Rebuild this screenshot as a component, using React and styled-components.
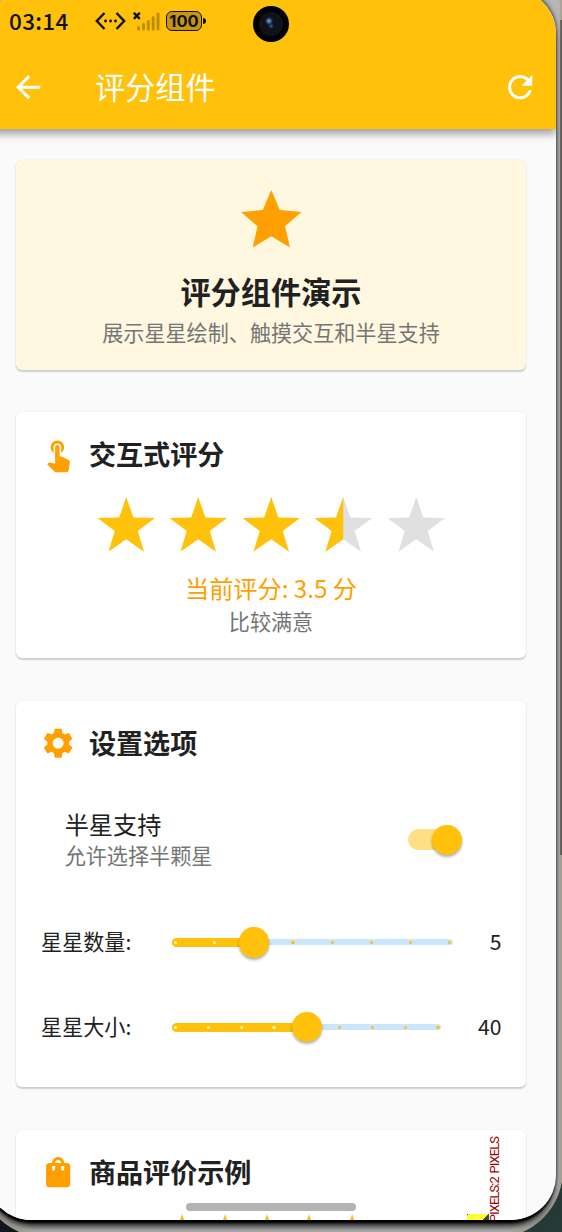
import React, { useState } from 'react';
import styled, { createGlobalStyle } from 'styled-components';
import { MdArrowBack, MdRefresh, MdStar, MdTouchApp, MdSettings, MdShoppingBag } from 'react-icons/md';

const amber = '#ffc10a';
const orange = '#ffa000';

const GlobalStyle = createGlobalStyle`
            * { box-sizing: border-box; }
            body {
                margin: 0;
                overflow: hidden;
                background: #243a36;
                font-family: "Noto Sans CJK SC", "Noto Sans", sans-serif;
                color: #212121;
            }
            `;
const Stage = styled.div`
            width: 562px;
            height: 1232px;
            overflow: hidden;
            background: linear-gradient(to right, #10161c 0, #10161c 40%, #243a36 80%);
            `;
const Frame = styled.div`
            width: 584px;
            height: 1258px;
            margin: -20px 0 0 -21px;
            padding: 9px 7px;
            border-radius: 20px 20px 68px 68px;
            background:
                linear-gradient(to right, transparent 580.5px, #454545 582px) 0 40px / 584px 835px no-repeat,
                linear-gradient(to right, #b6b6b6 579px, #b4b4b2 580.5px, #a8a299 582px);
            box-shadow: inset 0 -3px 4px #a59c8c;
            `;
const Screen = styled.div`
            position: relative;
            width: 570px;
            height: 1231px;
            overflow: hidden;
            border-radius: 45px;
            background: #fafafa;
            `;
const Glass = styled.div`
            border-radius: 45px;
            box-shadow: 0 4px 2px -1px #000, 0 8px 6px -3px #222, 0 9px 8px -3px #555, 1px -2px 4px -1px #333;
            `;
const Header = styled.header`
            position: relative;
            height: 140px;
            padding-top: 11px;
            background: ${amber};
            box-shadow: 0 5px 8px rgba(0, 0, 0, .36);
            `;
const StatusBar = styled.div`
            display: flex;
            align-items: center;
            height: 44px;
            padding: 0 0 2px 23px;
            color: #111;
            `;
const Time = styled.span`
            width: 86px;
            margin-top: -3px;
            font-size: 22.5px;
            font-weight: 500;
            letter-spacing: .3px;
            `;
const StatusIcon = styled.svg`
            display: block;
            flex: none;
            margin-right: ${props => props.$gap || 0}px;
            `;
const Battery = styled.span`
            display: flex;
            align-items: center;
            justify-content: center;
            width: 36px;
            height: 20px;
            border: 1.5px solid #111;
            border-radius: 6px;
            background: #c59610;
            font: bold 16.5px/17px Inter, sans-serif;
            `;
const BatteryTip = styled.span`
            width: 3px;
            height: 6px;
            margin: 0 47px 0 1px;
            border-radius: 0 3px 3px 0;
            background: #111;
            `;
const Camera = styled.span`
            width: 36px;
            height: 36px;
            margin-top: 6px;
            border-radius: 50%;
            background:
                radial-gradient(circle at 16px 15px, #9db9e8 0, #35598a 2px, transparent 4px),
                radial-gradient(circle at 18px 20px, #38588c 0, transparent 3px),
                radial-gradient(circle, #0b1420 0, #101216 9px, #131416 11px, #000 13px);
            `;
const AppBar = styled.div`
            display: flex;
            align-items: center;
            height: 86px;
            padding: 0 17.7px 0 24.3px;
            color: #fff;
            `;
const AppTitle = styled.h1`
            flex: 1;
            margin: -3px 0 0 48.3px;
            font-size: 30.2px;
            font-weight: 400;
            line-height: 40px;
            `;
const Content = styled.main`
            display: flex;
            flex-direction: column;
            gap: 42.4px;
            padding: 30.7px 30.3px;
            `;
const Card = styled.section`
            flex: none;
            height: ${props => props.$height}px;
            padding: 24.2px;
            border-radius: 6px;
            background: ${props => props.$tint || '#fff'};
            box-shadow: 0 1.5px 1.5px rgba(0, 0, 0, .17), 0 0 2px rgba(0, 0, 0, .07);
            `;
const Hero = styled(Card)`
            display: flex;
            flex-direction: column;
            align-items: center;
            `;
const HeroTitle = styled.h2`
            margin: 16.8px 0 10px;
            font-size: 30.2px;
            font-weight: 700;
            line-height: 36.6px;
            `;
const Caption = styled.p`
            margin: 0;
            font-size: 21.1px;
            line-height: 24.2px;
            color: #757575;
            text-align: center;
            `;
const CardHead = styled.div`
            display: flex;
            align-items: center;
            gap: 12.1px;
            height: 36.3px;
            margin-bottom: 24.2px;
            color: ${orange};
            `;
const CardTitle = styled.h3`
            margin: -1px 0 0;
            font-size: 27.1px;
            font-weight: 700;
            line-height: 36px;
            color: #212121;
            `;
const Stars = styled.div`
            display: flex;
            justify-content: center;
            gap: ${props => props.$gap}px;
            `;
const StarSvg = styled.svg`
            display: block;
            flex: none;
            `;
const Score = styled.p`
            margin: 15.2px 0 6px;
            font-size: 24.2px;
            line-height: 30px;
            text-align: center;
            color: ${orange};
            `;
const SwitchRow = styled.div`
            display: flex;
            align-items: center;
            justify-content: space-between;
            height: 108.6px;
            padding: 0 44px 0 24.2px;
            margin-bottom: 12.1px;
            `;
const SwitchText = styled.div`
            margin-top: -2px;
            `;
const SwitchTitle = styled.div`
            font-size: 24.2px;
            line-height: 32px;
            `;
const SwitchNote = styled(Caption)`
            line-height: 30px;
            text-align: left;
            `;
const Track = styled.button`
            display: flex;
            align-items: center;
            justify-content: ${props => props.$on ? 'flex-end' : 'flex-start'};
            width: 50px;
            height: 21px;
            padding: 0;
            border: 0;
            border-radius: 11px;
            background: ${props => props.$on ? '#ffe084' : '#bdbdbd'};
            `;
const Knob = styled.span`
            flex: none;
            width: 30.4px;
            height: 30.4px;
            border-radius: 50%;
            background: ${amber};
            box-shadow: 0 2px 3px rgba(0, 0, 0, .32);
            `;
const SwitchKnob = styled(Knob)`
            margin-right: -4.6px;
            `;
const SliderRow = styled.div`
            display: flex;
            align-items: center;
            height: 72.6px;
            margin-bottom: 12.1px;
            font-size: 21.1px;
            `;
const SliderLabel = styled.span`
            width: 131.9px;
            margin-top: -2.4px;
            padding-left: .6px;
            `;
const SliderValue = styled.span`
            margin: -2.4px 0 0 37px;
            `;
const Rail = styled.div`
            position: relative;
            display: flex;
            align-items: center;
            flex: 1;
            height: 6px;
            border-radius: 3px;
            background: #cbe6fc;
            `;
const Fill = styled.div`
            height: 9px;
            border-radius: 4.5px 0 0 4.5px;
            background: ${amber};
            `;
const Ticks = styled.div`
            position: absolute;
            inset: 0 1.5px;
            display: flex;
            align-items: center;
            justify-content: space-between;
            `;
const Tick = styled.span`
            width: 3.2px;
            height: 3.2px;
            border-radius: 50%;
            background: ${props => props.$active ? '#ffeeb5' : amber};
            `;
const SliderKnob = styled(Knob)`
            position: relative;
            margin-left: -15.2px;
            `;
const ReviewRow = styled.div`
            display: flex;
            align-items: flex-start;
            justify-content: space-between;
            margin-top: -.7px;
            padding: 0 12.8px 0 127px;
            `;
const Overflow = styled.div`
            position: relative;
            width: 21.5px;
            height: 40px;
            background: repeating-linear-gradient(135deg, #444 0 1px, #ffff30 1px 15.2px, #444 15.2px 29.4px);
            `;
const OverflowLabel = styled.span`
            position: absolute;
            left: 21px;
            top: -77px;
            writing-mode: vertical-rl;
            transform: rotate(180deg);
            font: 13px/14px Roboto, sans-serif;
            letter-spacing: -.95px;
            word-spacing: 1.5px;
            color: #900;
            white-space: nowrap;
            `;
const HomeBar = styled.div`
            position: absolute;
            left: 200px;
            bottom: 9px;
            width: 170px;
            height: 8px;
            border-radius: 4px;
            background: #b3b3b3;
            `;

// five-pointed star, inner radius is 0.4 of the outer one
const starPoints = Array.from({ length: 10 }, (_, i) => {
    const r = i % 2 ? 20 : 50;
    const a = i * Math.PI / 5 - Math.PI / 2;
    return `${50 + r * Math.cos(a)},${50 + r * Math.sin(a)}`;
}).join(' ');

function Star({ fill, size }) {
    return (
        <StarSvg width={size} height={size} viewBox="0 0 100 100">
            <polygon points={starPoints} fill={fill > 0.9 ? amber : '#e0e0e0'} />
            {fill === 0.5 && (
                <>
                    <clipPath id="half"><rect width="50" height="100" /></clipPath>
                    <polygon points={starPoints} fill={amber} clipPath="url(#half)" />
                </>
            )}
        </StarSvg>
    );
}

function Rating({ value, count, size, gap }) {
    return (
        <Stars $gap={gap}>
            {Array.from({ length: count }, (_, i) => (
                <Star key={i} size={size} fill={Math.max(0, Math.min(1, value - i))} />
            ))}
        </Stars>
    );
}

function Slider({ label, value, step, steps }) {
    return (
        <SliderRow>
            <SliderLabel>{label}</SliderLabel>
            <Rail>
                {/* the rail is 3px longer than the tick range at each end */}
                <Fill style={{ width: `calc(3px + (100% - 6px) * ${step / steps})` }} />
                <Ticks>
                    {Array.from({ length: steps + 1 }, (_, i) => <Tick key={i} $active={i < step} />)}
                </Ticks>
                <SliderKnob />
            </Rail>
            <SliderValue>{value}</SliderValue>
        </SliderRow>
    );
}

export default function App() {
    const [half, setHalf] = useState(true);

    return (
        <Stage>
            <GlobalStyle />
            <Frame>
                <Glass>
                    <Screen>
                        <Header>
                            <StatusBar>
                                <Time>03:14</Time>
                                <StatusIcon $gap={7} width="31" height="18" viewBox="0 0 31 18" fill="none" stroke="#111" strokeWidth="2.4">
                                    <path d="M9.5 1 1.8 9l7.7 8M21.5 1l7.7 8-7.7 8" />
                                    <path d="M10.5 9h.1M15.5 9h.1M20.5 9h.1" strokeWidth="2.8" strokeLinecap="round" />
                                </StatusIcon>
                                <StatusIcon $gap={6} width="27" height="19" viewBox="0 0 27 19" fill="none" strokeLinecap="round">
                                    <path d="M5.5 15.5v1.5M10.5 12.5V17M15.3 9.5V17M20.2 5.5V17M25 2v15" stroke="#bd8e0b" strokeWidth="3" />
                                    <path d="m.8.8 6 6m0-6-6 6" stroke="#111" strokeWidth="2.4" strokeLinecap="butt" />
                                </StatusIcon>
                                <Battery>100</Battery>
                                <BatteryTip />
                                <Camera />
                            </StatusBar>
                            <AppBar>
                                <MdArrowBack size={36.3} />
                                <AppTitle>评分组件</AppTitle>
                                <MdRefresh size={36.3} />
                            </AppBar>
                        </Header>
                        <Content>
                            <Hero $height={210.2} $tint="#fff7df">
                                <MdStar size={72.6} color={orange} />
                                <HeroTitle>评分组件演示</HeroTitle>
                                <Caption>展示星星绘制、触摸交互和半星支持</Caption>
                            </Hero>
                            <Card $height={246.1}>
                                <CardHead>
                                    <MdTouchApp size={36.3} />
                                    <CardTitle>交互式评分</CardTitle>
                                </CardHead>
                                <Rating value={3.5} count={5} size={60.5} gap={12.1} />
                                <Score>当前评分: 3.5 分</Score>
                                <Caption>比较满意</Caption>
                            </Card>
                            <Card $height={386.6}>
                                <CardHead>
                                    <MdSettings size={36.3} />
                                    <CardTitle>设置选项</CardTitle>
                                </CardHead>
                                <SwitchRow>
                                    <SwitchText>
                                        <SwitchTitle>半星支持</SwitchTitle>
                                        <SwitchNote>允许选择半颗星</SwitchNote>
                                    </SwitchText>
                                    <Track $on={half} onClick={() => setHalf(!half)}><SwitchKnob /></Track>
                                </SwitchRow>
                                <Slider label="星星数量:" value={5} step={2} steps={7} />
                                <Slider label="星星大小:" value={40} step={4} steps={8} />
                            </Card>
                            <Card $height={300}>
                                <CardHead>
                                    <MdShoppingBag size={36.3} />
                                    <CardTitle>商品评价示例</CardTitle>
                                </CardHead>
                                <ReviewRow>
                                    <Rating value={5} count={5} size={30.2} gap={12.1} />
                                    <Overflow>
                                        <OverflowLabel>PIXELS:2 PIXELS</OverflowLabel>
                                    </Overflow>
                                </ReviewRow>
                            </Card>
                        </Content>
                        <HomeBar />
                    </Screen>
                </Glass>
            </Frame>
        </Stage>
    );
}
